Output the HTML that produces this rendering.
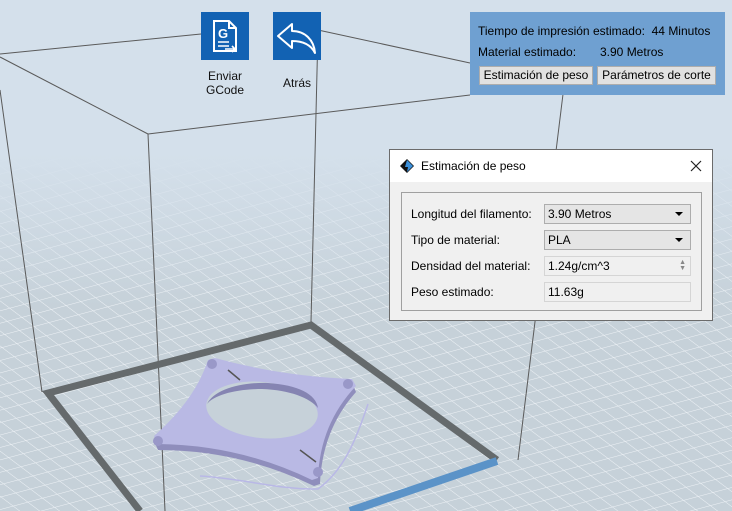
<!DOCTYPE html>
<html><head><meta charset="utf-8"><style>
html,body{margin:0;padding:0;}
body{width:732px;height:511px;overflow:hidden;position:relative;font-family:"Liberation Sans",sans-serif;font-size:12px;color:#000;background:#d4e0eb;}
svg.bg{position:absolute;left:0;top:0;}
.ico{position:absolute;top:12px;width:48px;height:48px;background:#1262b3;}
.lbl{position:absolute;font-size:12px;text-align:center;line-height:14px;color:#111;}
.info{position:absolute;left:470px;top:12px;width:255px;height:83px;background:#6fa0d1;}
.info .t{position:absolute;left:8px;font-size:12px;}
.btn{position:absolute;top:54px;height:19px;background:#e1e1e1;border:1px solid #adadad;box-sizing:border-box;font-size:12px;line-height:17px;text-align:center;}
.dlg{position:absolute;left:389px;top:149px;width:324px;height:172px;border:1px solid #6b6b6b;box-sizing:border-box;background:#f0f0f0;}
.dlg .title{height:32px;background:#fff;position:relative;}
.grp{position:absolute;left:11px;top:42px;width:301px;height:119px;border:1px solid #a0a0a0;box-sizing:border-box;}
.row{position:absolute;left:9px;font-size:12px;}
.box{position:absolute;left:142px;width:147px;height:20px;box-sizing:border-box;font-size:12px;line-height:18px;padding-left:3px;}
.combo{background:#e5e5e5;border:1px solid #adadad;}
.edit{background:#f0f0f0;border:1px solid #d5d5d5;}
.arr{position:absolute;right:7px;top:7px;width:0;height:0;border-left:4px solid transparent;border-right:4px solid transparent;border-top:4px solid #000;}
</style></head><body>
<svg class="bg" width="732" height="511" viewBox="0 0 732 511">
<defs>
<linearGradient id="fade" x1="0" y1="0" x2="0" y2="1">
<stop offset="0" stop-color="#d4e0eb" stop-opacity="1"/>
<stop offset="0.3" stop-color="#d4e0eb" stop-opacity="1"/>
<stop offset="0.6" stop-color="#d4e0eb" stop-opacity="0"/>
</linearGradient>
<pattern id="g1" width="12" height="12" patternUnits="userSpaceOnUse" patternTransform="rotate(-15)">
<line x1="0" y1="0" x2="12" y2="0" stroke="#eef2f6" stroke-width="1"/>
</pattern>
<pattern id="g2" width="12" height="12" patternUnits="userSpaceOnUse" patternTransform="rotate(37)">
<line x1="0" y1="0" x2="12" y2="0" stroke="#eef2f6" stroke-width="1"/>
</pattern>
</defs>
<rect x="0" y="120" width="732" height="391" fill="#c6d1d9"/>
<rect x="0" y="120" width="732" height="391" fill="url(#g1)"/>
<rect x="0" y="120" width="732" height="391" fill="url(#g2)"/>
<rect x="0" y="0" width="732" height="511" fill="url(#fade)"/>
<g stroke="#5a5a5a" stroke-width="1" fill="none">
<line x1="0" y1="54" x2="201" y2="34"/>
<line x1="318" y1="30" x2="470" y2="63"/>
<line x1="0" y1="57" x2="148" y2="134"/>
<line x1="148" y1="134" x2="470" y2="95"/>
<line x1="148" y1="134" x2="165" y2="511"/>
<line x1="0" y1="90" x2="42" y2="392"/>
<line x1="318" y1="30" x2="311" y2="322"/>
<line x1="564" y1="86" x2="518" y2="460"/>
</g>
<g stroke="#656a6c" stroke-width="7" fill="none">
<polyline points="140,511 48,393 311,325 497,460"/>
</g>
<line x1="350" y1="511" x2="497" y2="461" stroke="#5b93c8" stroke-width="8"/>
<!-- part -->
<path d="M368,404 C356,440 344,470 318,489 C280,490 240,478 200,476" stroke="#b9b8e6" stroke-width="1.5" fill="none"/>
<path d="M215,362 Q280,380 352,383 L356,392 Q322,430 320,484 L314,486 Q240,450 158,450 L154,441 Q195,405 208,365 Z" fill="#8f8ebc"/>
<path d="M215,358 Q280,376 352,379 L356,386 Q320,424 318,478 L312,480 Q240,445 158,444 L154,436 Q195,400 208,360 Z" fill="#b9b9e4"/>
<ellipse cx="262" cy="410" rx="56" ry="28" transform="rotate(6 262 410)" fill="#c6d1d9"/>
<path d="M207,404 C214,390 240,382 268,383 C298,385 316,394 318,408 C310,398 290,390 262,389 C236,389 214,395 207,404 Z" fill="#8584b2"/>
<g stroke="#555" stroke-width="1.5"><line x1="228" y1="370" x2="240" y2="380"/><line x1="300" y1="450" x2="316" y2="462"/></g>
<circle cx="212" cy="364" r="5" fill="#9998c8"/><circle cx="348" cy="384" r="5" fill="#9998c8"/><circle cx="158" cy="441" r="5" fill="#9998c8"/><circle cx="318" cy="472" r="5" fill="#9998c8"/>
</svg>

<div class="ico" style="left:201px;">
<svg width="48" height="48" viewBox="0 0 48 48" fill="none" stroke="#fff" stroke-width="2">
<path d="M13 9 H28 L35 16 V39 H13 Z"/><path d="M28 9 V16 H35"/>
<text x="17" y="26" font-family="Liberation Sans" font-weight="bold" font-size="13" fill="#fff" stroke="none">G</text>
<path d="M17 30 H28 M17 34 H28 M24 37 H34 M31 34 L34 37 L31 40" stroke-width="1.6"/>
</svg></div>
<div class="ico" style="left:273px;">
<svg width="48" height="48" viewBox="0 0 48 48" fill="none" stroke="#fff" stroke-width="2" stroke-linejoin="round">
<path d="M5 24 L19 12 V19 C32 19 41 28 42 41 C38 33 30 29 19 29 V36 Z"/>
</svg></div>
<div class="lbl" style="left:190px;top:69px;width:70px;">Enviar<br>GCode</div>
<div class="lbl" style="left:268px;top:76px;width:58px;">Atrás</div>

<div class="info">
<div class="t" style="top:12px;">Tiempo de impresión estimado:&nbsp; 44 Minutos</div>
<div class="t" style="top:33px;">Material estimado:</div>
<div class="t" style="top:33px;left:130px;">3.90 Metros</div>
<div class="btn" style="left:9px;width:114px;">Estimación de peso</div>
<div class="btn" style="left:127px;width:119px;">Parámetros de corte</div>
</div>

<div class="dlg">
<div class="title">
<svg style="position:absolute;left:10px;top:9px" width="14" height="14" viewBox="0 0 14 14"><path d="M7 0 L14 7 L7 14 L0 7 Z" fill="#111"/><path d="M7 1 L13 7 L7 13 L8 8 L5 8 Z" fill="#3b8fd9"/></svg>
<span style="position:absolute;left:31px;top:9px;">Estimación de peso</span>
<svg style="position:absolute;left:300px;top:10px" width="12" height="12" viewBox="0 0 12 12"><path d="M1 1 L11 11 M11 1 L1 11" stroke="#222" stroke-width="1.2"/></svg>
</div>
<div class="grp">
<div class="row" style="top:14px;">Longitud del filamento:</div>
<div class="box combo" style="top:11px;">3.90 Metros<span class="arr"></span></div>
<div class="row" style="top:40px;">Tipo de material:</div>
<div class="box combo" style="top:37px;">PLA<span class="arr"></span></div>
<div class="row" style="top:66px;">Densidad del material:</div>
<div class="box edit" style="top:63px;">1.24g/cm^3<span style="position:absolute;right:4px;top:3px;font-size:7px;line-height:6px;color:#888;">▲<br>▼</span></div>
<div class="row" style="top:92px;">Peso estimado:</div>
<div class="box edit" style="top:89px;">11.63g</div>
</div>
</div>
</body></html>
